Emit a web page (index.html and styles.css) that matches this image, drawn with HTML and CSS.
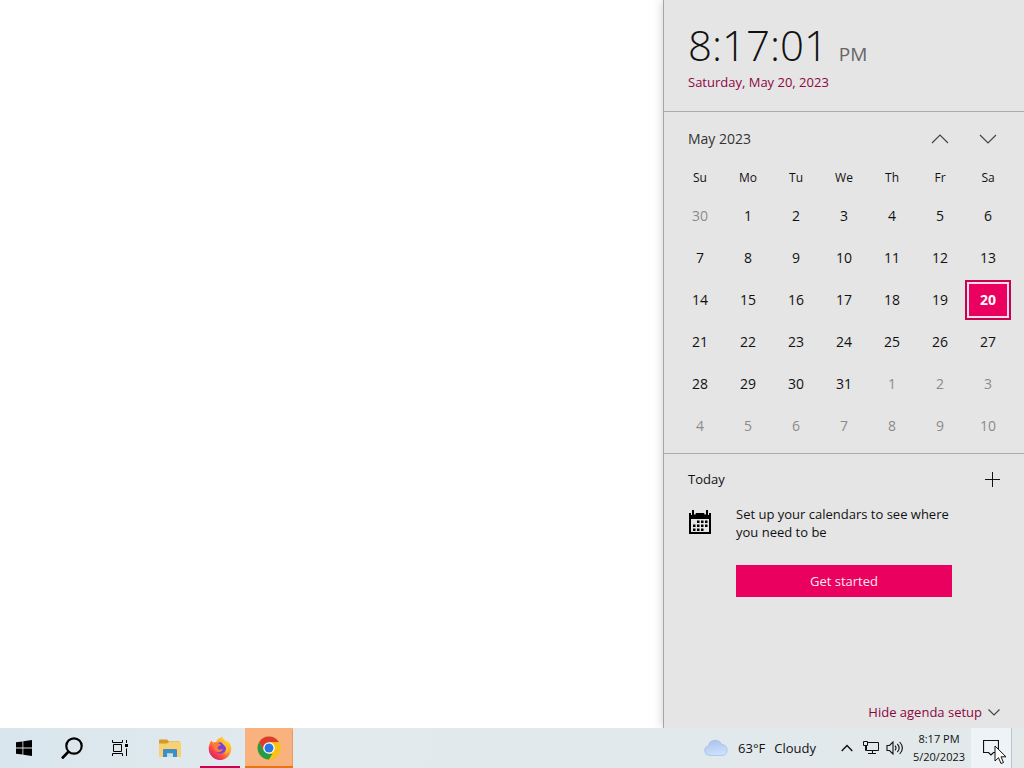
FILE: index.html
```html
<!DOCTYPE html>
<html lang="en">

<head>
   <meta charset="UTF-8">
   <meta name="viewport" content="width=device-width, initial-scale=1.0">
   <title>Calendar</title>
   <link rel="stylesheet" href="styles.css">
</head>

<body>
   <main class="desktop">
      <aside class="flyout">
         <section class="clock">
            <div class="clock__time">8:17:01 <span class="clock__period">PM</span></div>
            <a href="#" class="clock__date">Saturday, May 20, 2023</a>
         </section>

         <section class="calendar">
            <div class="calendar__header">
               <button class="calendar__title" type="button">May 2023</button>
               <button class="calendar__arrow" type="button" aria-label="Previous month">
                  <svg width="18" height="10" viewBox="0 0 18 10"><path d="M1 9l8-8 8 8" /></svg>
               </button>
               <button class="calendar__arrow" type="button" aria-label="Next month">
                  <svg width="18" height="10" viewBox="0 0 18 10"><path d="M1 1l8 8 8-8" /></svg>
               </button>
            </div>
            <table class="days">
               <thead>
                  <tr><th>Su</th><th>Mo</th><th>Tu</th><th>We</th><th>Th</th><th>Fr</th><th>Sa</th></tr>
               </thead>
               <tbody>
                  <tr>
                     <td><button class="day day--other" type="button">30</button></td>
                     <td><button class="day" type="button">1</button></td>
                     <td><button class="day" type="button">2</button></td>
                     <td><button class="day" type="button">3</button></td>
                     <td><button class="day" type="button">4</button></td>
                     <td><button class="day" type="button">5</button></td>
                     <td><button class="day" type="button">6</button></td>
                  </tr>
                  <tr>
                     <td><button class="day" type="button">7</button></td>
                     <td><button class="day" type="button">8</button></td>
                     <td><button class="day" type="button">9</button></td>
                     <td><button class="day" type="button">10</button></td>
                     <td><button class="day" type="button">11</button></td>
                     <td><button class="day" type="button">12</button></td>
                     <td><button class="day" type="button">13</button></td>
                  </tr>
                  <tr>
                     <td><button class="day" type="button">14</button></td>
                     <td><button class="day" type="button">15</button></td>
                     <td><button class="day" type="button">16</button></td>
                     <td><button class="day" type="button">17</button></td>
                     <td><button class="day" type="button">18</button></td>
                     <td><button class="day" type="button">19</button></td>
                     <td><button class="day day--today" type="button">20</button></td>
                  </tr>
                  <tr>
                     <td><button class="day" type="button">21</button></td>
                     <td><button class="day" type="button">22</button></td>
                     <td><button class="day" type="button">23</button></td>
                     <td><button class="day" type="button">24</button></td>
                     <td><button class="day" type="button">25</button></td>
                     <td><button class="day" type="button">26</button></td>
                     <td><button class="day" type="button">27</button></td>
                  </tr>
                  <tr>
                     <td><button class="day" type="button">28</button></td>
                     <td><button class="day" type="button">29</button></td>
                     <td><button class="day" type="button">30</button></td>
                     <td><button class="day" type="button">31</button></td>
                     <td><button class="day day--other" type="button">1</button></td>
                     <td><button class="day day--other" type="button">2</button></td>
                     <td><button class="day day--other" type="button">3</button></td>
                  </tr>
                  <tr>
                     <td><button class="day day--other" type="button">4</button></td>
                     <td><button class="day day--other" type="button">5</button></td>
                     <td><button class="day day--other" type="button">6</button></td>
                     <td><button class="day day--other" type="button">7</button></td>
                     <td><button class="day day--other" type="button">8</button></td>
                     <td><button class="day day--other" type="button">9</button></td>
                     <td><button class="day day--other" type="button">10</button></td>
                  </tr>
               </tbody>
            </table>
         </section>

         <section class="agenda">
            <div class="agenda__header">
               <span>Today</span>
               <button class="agenda__add" type="button" aria-label="New event">
                  <svg width="15" height="15" viewBox="0 0 15 15"><path d="M7.500 0v15M0 7.500h15" /></svg>
               </button>
            </div>
            <div class="agenda__body">
               <svg class="agenda__icon" width="24" height="26" viewBox="0 0 24 26">
                  <path d="M1 3h2v2h1V0h2v4l1 1 1-2h8l1 2 1-1V0h2v5h1V3h2v21H1zM3 9v13h18V9z" fill-rule="evenodd" />
                  <path d="M9 10.500h2.500v2.500H9zM13 10.500h2.500v2.500H13zM17 10.500h2.500v2.500H17zM5 14.500h2.500V17H5zM9 14.500h2.500V17H9zM13 14.500h2.500V17H13zM17 14.500h2.500V17H17zM5 18.500h2.500V21H5zM9 18.500h2.500V21H9zM13 18.500h2.500V21H13z" />
               </svg>
               <div class="agenda__setup">
                  <p class="agenda__text">Set up your calendars to see where you need to be</p>
                  <button class="agenda__start" type="button">Get started</button>
               </div>
            </div>
            <button class="agenda__hide" type="button">
               Hide agenda setup
               <svg width="12" height="7" viewBox="0 0 12 7"><path d="M.5.5L6 6l5.500-5.500" /></svg>
            </button>
         </section>
      </aside>
   </main>

   <footer class="taskbar">
      <div class="taskbar__apps">
         <button class="app" type="button" aria-label="Start">
            <svg width="16" height="16" viewBox="0 0 16 16">
               <path d="M0 2.300L6.500 1.400v6.200H0zM7.300 1.300L16 0v7.600H7.300zM0 8.400h6.500v6.200L0 13.700zM7.300 8.400H16V16l-8.700-1.300z" />
            </svg>
         </button>
         <button class="app" type="button" aria-label="Search">
            <svg width="22" height="22" viewBox="0 0 22 22" fill="none" stroke="#000" stroke-width="2.200">
               <circle cx="13" cy="9" r="7.700" />
               <path d="M7.600 14.500L1 21.500" stroke-width="2.600" />
            </svg>
         </button>
         <button class="app" type="button" aria-label="Task view">
            <svg width="16" height="16" viewBox="0 0 16 16" fill="none" stroke="#000" stroke-width="1">
               <path d="M.5 0v2.500h10V0M.5 16v-2.500h10V16M1.500 4.500h8v7h-8zM14.500 0v3M14.500 8.500V16" />
               <path d="M13 4h3v3h-3z" fill="#000" stroke="none" />
            </svg>
         </button>
         <button class="app app--explorer" type="button" aria-label="File Explorer">
            <svg width="22" height="19" viewBox="0 0 22 19">
               <path d="M0 1.500Q0 .5 1 .5h7l2 2h10q1 0 1 1V7H0z" fill="#d79b24" />
               <path d="M0 4.500h8L10 3h11q1 0 1 1v13q0 1-1 1H1q-1 0-1-1z" fill="#f8d270" />
               <path d="M4 18v-7q0-1 1-1h12q1 0 1 1v7h-4v-3.500H8V18z" fill="#3c8fcb" />
               <path d="M8 14.500h6V18H8z" fill="#c4e2e6" />
            </svg>
         </button>
         <button class="app app--open" type="button" aria-label="Firefox">
            <svg width="24" height="24" viewBox="0 0 24 24">
               <defs>
                  <linearGradient id="fox" x1=".85" y1=".1" x2=".2" y2=".9">
                     <stop offset="0" stop-color="#ffe43c" />
                     <stop offset=".4" stop-color="#ffa22b" />
                     <stop offset=".75" stop-color="#ff4647" />
                     <stop offset="1" stop-color="#e02068" />
                  </linearGradient>
               </defs>
               <path d="M3.500 4.500L5 6.800 8 6q2-4 6-5.500 1 3 4 4.500l1.500 1.500L19 4q4.500 4 4.300 9A11.300 11.300 0 1 1 1.500 8.500q.3-2.500 2-4z" fill="url(#fox)" />
               <circle cx="12.300" cy="12" r="5.800" fill="#7543d6" />
               <path d="M5 6.800q3-1 5.500.7l2.500.7q-.4 1.700-3 2.200-.8 1.600.2 2.600 2 1.500 4.800-.4-1.300 4-5 3.700-5-1-5-9.500z" fill="#ff7b35" />
               <path d="M14 .5q.6 3.500 4 6.200 4 4 1.500 9-1 1.800-3 3 2.800-3.500 1.300-7.200-1-2-3-3.500-2.800-3-.8-7.500z" fill="#ffc338" />
            </svg>
         </button>
         <button class="app app--active" type="button" aria-label="Google Chrome">
            <svg width="24" height="24" viewBox="0 0 24 24">
               <circle cx="12" cy="12" r="11.500" fill="#fbc116" />
               <path d="M12 12L7 14.900 2 6.300A11.500 11.500 0 0 1 22 6.300H12z" fill="#dc3b2d" />
               <path d="M2 6.300L7 14.900l5 2.800h5L12 23.500A11.500 11.500 0 0 1 2 6.300z" fill="#2b9a48" />
               <path d="M22 6.300H12v5.700l5 2.900-5 8.600A11.500 11.500 0 0 0 22 6.300z" fill="#fbc116" />
               <circle cx="12" cy="12" r="5.800" fill="#fff" />
               <circle cx="12" cy="12" r="4.500" fill="#2878e3" />
            </svg>
         </button>
      </div>

      <div class="tray">
         <button class="tray__weather" type="button">
            <svg width="26" height="18" viewBox="0 0 26 18">
               <defs>
                  <linearGradient id="cloud" x1="0" y1="0" x2=".3" y2="1">
                     <stop offset="0" stop-color="#a9c0ec" />
                     <stop offset="1" stop-color="#cbe0fb" />
                  </linearGradient>
               </defs>
               <path d="M6 16.500a5 5 0 0 1-.6-9.800A7 7 0 0 1 18.600 5.500a5.600 5.600 0 0 1 1.400 11z" fill="url(#cloud)" stroke="#9db3e2" stroke-width=".6" />
            </svg>
            <span>63°F</span>
            <span>Cloudy</span>
         </button>
         <button class="tray__icon" type="button" aria-label="Show hidden icons">
            <svg width="12" height="8" viewBox="0 0 12 8"><path d="M.7 7L6 1.500 11.300 7" stroke-width="1.400" /></svg>
         </button>
         <button class="tray__icon" type="button" aria-label="Network">
            <svg width="16" height="14" viewBox="0 0 16 14"><path d="M5 1.500h10.500v8H3.500V5M.5.500h4v4h-4zM2.500 4.500v5h1M9.500 9.500V13M5 12.500h8" /></svg>
         </button>
         <button class="tray__icon" type="button" aria-label="Volume">
            <svg width="18" height="14" viewBox="0 0 18 14"><path d="M1 4.500h2.500L7 1v12L3.500 9.500H1zM9 4.700q2 2.300 0 4.600M11.300 2.800q3.700 4.200 0 8.400M13.700 1q5.400 6 0 12" stroke-width="1.100" /></svg>
         </button>
         <button class="tray__clock" type="button">8:17 PM<br>5/20/2023</button>
         <button class="tray__notifications" type="button" aria-label="Notifications">
            <svg width="16" height="16" viewBox="0 0 16 16"><path d="M.5.500h15v12h-5L8 15l-2.500-2.500h-5z" stroke-width="1.200" /></svg>
            <svg class="cursor" width="13" height="20" viewBox="0 0 13 20"><path d="M1 1v15l3.500-3.300L7 18.500l2.500-1-2.500-5.700h5z" /></svg>
         </button>
         <button class="tray__desktop" type="button" aria-label="Show desktop"></button>
      </div>
   </footer>
</body>

</html>
```

FILE: styles.css
```css
*,
*::before,
*::after {
   box-sizing: border-box;
}

body {
   margin: 0;
   min-height: 100vh;
   display: flex;
   flex-direction: column;
   background-color: #fff;
   color: #111;
   font-family: "Open Sans", "Noto Sans", sans-serif;
   font-size: 13px;
   line-height: 18px;
}

button {
   margin: 0;
   padding: 0;
   border: none;
   background-color: transparent;
   color: inherit;
   font: inherit;
   cursor: pointer;
}

svg {
   display: block;
   flex: none;
}

.desktop {
   flex: 1;
   display: flex;
   justify-content: flex-end;
}

/* flyout */
.flyout {
   width: 361px;
   display: flex;
   flex-direction: column;
   background-color: #e5e5e5;
   border-left: 1px solid #a5a5a5;
   box-shadow: 0 0 10px rgba(0, 0, 0, 0.2);
}

.clock {
   padding: 16px 24px 20px;
   border-bottom: 1px solid #ababab;
}

.clock__time {
   font-size: 42px;
   font-weight: 300;
   line-height: 57px;
}

.clock__period {
   color: #666;
   font-size: 19px;
   font-weight: 400;
   line-height: 1;
}

.clock__date {
   display: block;
   color: #8c0642;
   text-decoration: none;
}

.calendar {
   padding: 3px 12px 6px;
   border-bottom: 1px solid #ababab;
}

.calendar__header {
   height: 48px;
   display: flex;
   align-items: center;
}

.calendar__title {
   margin-right: auto;
   padding-left: 12px;
   color: #333;
   font-size: 14px;
}

.calendar__arrow {
   width: 48px;
   height: 48px;
   display: flex;
   justify-content: center;
   align-items: center;
}

.calendar__arrow svg,
.agenda__hide svg {
   fill: none;
   stroke: #444;
   stroke-width: 1.2;
}

.days {
   width: 100%;
   table-layout: fixed;
   border-collapse: collapse;
}

.days th {
   height: 32px;
   padding: 0 0 2px;
   font-size: 12px;
   font-weight: 400;
}

.days td {
   height: 42px;
   padding: 1px;
}

.day {
   display: block;
   width: 100%;
   height: 40px;
   font-size: 14px;
}

.day--other {
   color: #8b8b8b;
}

.day--today {
   border: 2px solid #c5044f;
   background-color: #ea005e;
   box-shadow: inset 0 0 0 2px #ffdcec;
   color: #fff;
   font-weight: 700;
}

/* agenda */
.agenda {
   flex: 1;
   display: flex;
   flex-direction: column;
   padding: 13px 24px 7px;
}

.agenda__header {
   height: 24px;
   display: flex;
   justify-content: space-between;
   align-items: center;
}

.agenda__add svg {
   fill: none;
   stroke: #111;
   stroke-width: 1;
}

.agenda__body {
   display: flex;
   gap: 24px;
   padding-top: 14px;
}

.agenda__icon {
   margin-top: 5px;
}

.agenda__setup {
   width: 216px;
}

.agenda__text {
   margin: 0 0 24px;
}

.agenda__start {
   width: 100%;
   height: 32px;
   background-color: #ea005e;
   color: #ffe6f1;
}

.agenda__hide {
   margin-top: auto;
   display: flex;
   align-self: flex-end;
   align-items: center;
   gap: 6px;
   color: #8c0642;
}

/* taskbar */
.taskbar {
   height: 40px;
   display: flex;
   justify-content: space-between;
   background: linear-gradient(90deg, #d9e6ed, #e2eaee 30%, #e1e9ed 70%, #e2e9e9);
}

.taskbar__apps,
.tray {
   display: flex;
}

.app {
   width: 48px;
   display: flex;
   justify-content: center;
   align-items: center;
}

.app--explorer {
   width: 52px;
}

.app--open {
   width: 40px;
   margin: 0 5px 0 4px;
   border-top: 2px solid transparent;
   border-bottom: 2px solid #cd0052;
}

.app--active {
   border-top: 2px solid #f9b17e;
   border-bottom: 2px solid #ee7410;
   background-color: #f9b17e;
   box-shadow: inset -1px 0 #e39a66;
}

.tray__icon svg,
.tray__notifications svg {
   fill: none;
   stroke: #111;
}

.tray__weather {
   display: flex;
   align-items: center;
   gap: 9px;
   margin-right: 19px;
}

.tray__icon {
   width: 24px;
   display: flex;
   justify-content: center;
   align-items: center;
}

.tray__clock {
   width: 64px;
   font-size: 11px;
}

.tray__notifications {
   position: relative;
   width: 40px;
   display: flex;
   justify-content: center;
   align-items: center;
   background-color: #edf3f6;
}

.tray__notifications .cursor {
   position: absolute;
   top: 17px;
   left: 23px;
   fill: #fff;
}

.tray__desktop {
   width: 13px;
   border-left: 1px solid #bcc5c9;
}
```
